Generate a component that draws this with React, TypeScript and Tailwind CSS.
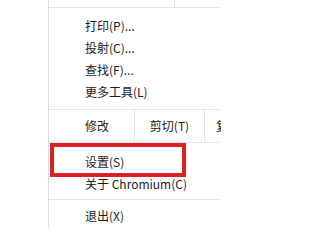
const FONT = { fontFamily: '"Microsoft YaHei", "Noto Sans CJK SC", "Noto Sans", sans-serif' };

function Item({ label }: { label: string }) {
  return (
    <div className="flex h-[22px] items-center pl-[36px] text-[12px] text-[#1b1b1b]">
      {label}
    </div>
  );
}

export default function App() {
  return (
    <div className="flex h-[228px] w-[221px] overflow-hidden bg-white" style={FONT}>
      <div className="w-[48px] shrink-0 bg-white" />
      <div className="flex min-w-0 flex-1 flex-col border-l border-[#dcdcdc]">
        {/* tail of the zoom row */}
        <div className="flex h-[8px] shrink-0 border-b border-[#e6e6e6]">
          <div className="w-[126px] shrink-0 border-r border-[#e6e6e6]" />
        </div>

        <div className="flex flex-col border-b border-[#e6e6e6] pt-[7px] pb-[6px]">
          <Item label="打印(P)..." />
          <Item label="投射(C)..." />
          <Item label="查找(F)..." />
          <Item label="更多工具(L)" />
        </div>

        {/* edit row */}
        <div className="flex h-[33px] shrink-0 border-b border-[#e6e6e6] text-[12px] text-[#1b1b1b]">
          <div className="flex w-[85px] shrink-0 items-center pl-[36px]">修改</div>
          <div className="flex w-[70px] shrink-0 items-center justify-center border-l border-[#e6e6e6]">
            剪切(T)
          </div>
          <div className="flex shrink-0 items-center whitespace-nowrap border-l border-[#e6e6e6] pl-[11px]">
            复制(C)
          </div>
        </div>

        <div className="relative flex flex-col border-b border-[#e6e6e6] pt-[8px] pb-[4px]">
          <Item label="设置(S)" />
          <Item label="关于 Chromium(C)" />
          <div className="absolute top-0 left-[1px] h-[34px] w-[136px] border-[4px] border-[#dc1f26]" />
        </div>

        <div className="flex flex-col pt-[5px]">
          <Item label="退出(X)" />
        </div>
      </div>
    </div>
  );
}
